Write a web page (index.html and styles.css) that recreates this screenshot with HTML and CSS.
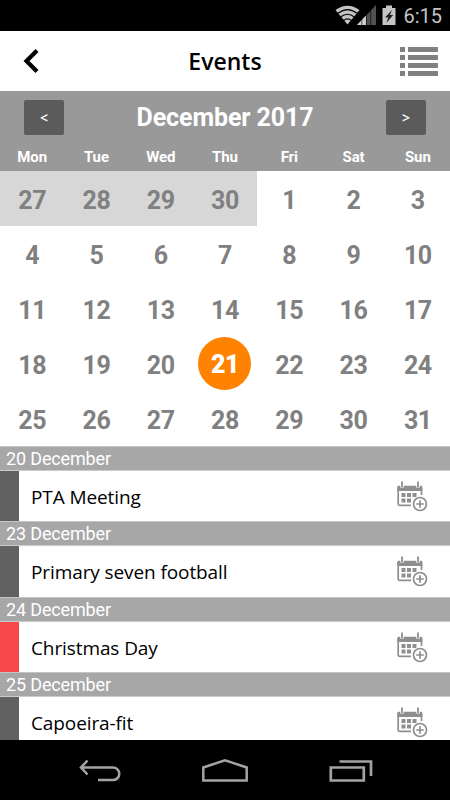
FILE: index.html
```
<!DOCTYPE html>
<html lang="en">
<head>
    <meta charset="UTF-8">
    <meta name="viewport" content="width=device-width, initial-scale=1.0">
    <title>Events</title>
    <link rel="stylesheet" href="styles.css">
</head>
<body>
    <svg class="defs" width="0" height="0">
        <symbol id="add-event" viewBox="0 0 32 32">
            <path d="M2.200 6v17q0 1.300 1.300 1.300H15M25.500 7v7" fill="none" stroke="#8e8e8e" stroke-width="1.700"/>
            <path d="M1.400 6q0-1.300 1.300-1.300h22.400q1.300 0 1.300 1.300v4h-25z" fill="#8e8e8e"/>
            <path d="M6 1v5.500M22 1v5.500" stroke="#fff" stroke-width="3.600"/>
            <path d="M6 .5v5.500M22 .5v5.500" stroke="#8e8e8e" stroke-width="1.800"/>
            <path d="M5.500 12h4v4h-4zM11 12h4v4h-4zM16.500 12h4v4h-4zM5.500 17.500h4v4h-4zM11 17.500h4v4h-4z" fill="#8e8e8e"/>
            <circle cx="24" cy="23" r="8" fill="#fff"/>
            <circle cx="24" cy="23" r="6.500" fill="#fff" stroke="#8e8e8e" stroke-width="1.700"/>
            <path d="M20.200 23h7.600M24 19.200v7.600" stroke="#8e8e8e" stroke-width="1.700"/>
        </symbol>
    </svg>

    <div class="status-bar">
        <svg class="status-icons" width="62" height="22" viewBox="0 0 62 22">
            <path d="M0.500 5Q12.500-3.500 24.500 5L12.500 19.500z" fill="#c4c4c4"/>
            <path d="M3 8.300Q12.500.8 22 8.300M5.500 12Q12.500 6.500 19.500 12M8.500 15.500Q12.500 12.300 16.500 15.500" fill="none" stroke="#000" stroke-width="1.200"/>
            <path d="M41 0v20H22z" fill="#505050"/>
            <path d="M31 10.500V20h-9z" fill="#d0d0d0"/>
            <path d="M26.800 12v9M31.400 8v13M35.700 3v18" stroke="#000" stroke-width=".6"/>
            <path d="M51 .5h6V3h3.500v17h-13V3H51z" fill="#c4c4c4"/>
            <path d="M57 5l-7 7.500h3.300l-2 5.500 7-8h-3.300z" fill="#222"/>
        </svg>
        <span class="clock">6:15</span>
    </div>

    <div class="title-bar">
        <svg class="back" width="16" height="26" viewBox="0 0 16 26"><path d="M14 2.500L3.500 13 14 23.500" fill="none" stroke="#000" stroke-width="4.200"/></svg>
        <h1>Events</h1>
        <svg class="list" width="38" height="30" viewBox="0 0 38 30">
            <path d="M0 2.500h5M8 2.500h30M0 10.500h5M8 10.500h30M0 18.500h5M8 18.500h30M0 26.500h5M8 26.500h30" stroke="#808080" stroke-width="5"/>
        </svg>
    </div>

    <div class="calendar">
        <div class="month">
            <button>&lt;</button>
            <h2>December 2017</h2>
            <button>&gt;</button>
        </div>
        <div class="weekdays">
            <span>Mon</span><span>Tue</span><span>Wed</span><span>Thu</span><span>Fri</span><span>Sat</span><span>Sun</span>
        </div>
        <div class="days">
            <span class="other">27</span><span class="other">28</span><span class="other">29</span><span class="other">30</span><span>1</span><span>2</span><span>3</span>
            <span>4</span><span>5</span><span>6</span><span>7</span><span>8</span><span>9</span><span>10</span>
            <span>11</span><span>12</span><span>13</span><span>14</span><span>15</span><span>16</span><span>17</span>
            <span>18</span><span>19</span><span>20</span><span class="selected"><b class="today">21</b></span><span>22</span><span>23</span><span>24</span>
            <span>25</span><span>26</span><span>27</span><span>28</span><span>29</span><span>30</span><span>31</span>
        </div>
    </div>

    <div class="events">
        <div class="date">20 December</div>
        <div class="event"><span>PTA Meeting</span><svg><use href="#add-event"/></svg></div>
        <div class="date">23 December</div>
        <div class="event"><span>Primary seven football</span><svg><use href="#add-event"/></svg></div>
        <div class="date">24 December</div>
        <div class="event holiday"><span>Christmas Day</span><svg><use href="#add-event"/></svg></div>
        <div class="date">25 December</div>
        <div class="event"><span>Capoeira-fit</span><svg><use href="#add-event"/></svg></div>
    </div>

    <div class="nav-bar">
        <svg width="42" height="26" viewBox="0 0 42 26"><path d="M8.500 2.500L2 9.500l6.500 7M2 9.500h32a6.300 6.300 0 0 1 0 12.600H19" fill="none" stroke="#a3a3a3" stroke-width="2.500"/></svg>
        <svg width="46" height="26" viewBox="0 0 46 26"><path d="M1.300 22.500V9.500L23 2.200l21.700 7.300v13z" fill="none" stroke="#a3a3a3" stroke-width="2.500"/></svg>
        <svg width="44" height="26" viewBox="0 0 44 26"><path d="M1.800 9.500h33v13h-33zM10.500 3.500H42v14.500" fill="none" stroke="#a3a3a3" stroke-width="2.700"/></svg>
    </div>
</body>
</html>
```
FILE: styles.css
```
body {
    display: flex;
    flex-direction: column;
    width: 450px;
    height: 800px;
    margin: 0;
    overflow: hidden;
    background-color: #fff;
    font-family: Roboto, sans-serif;
}

.defs {
    display: none;
}

.status-bar {
    display: flex;
    justify-content: flex-end;
    box-sizing: border-box;
    height: 31px;
    flex: none;
    padding: 5px 8px 0 0;
    background-color: #000;
}

.clock {
    margin-left: 6px;
    color: #c4c4c4;
    font-size: 20px;
    line-height: 23px;
}

.title-bar {
    display: flex;
    align-items: center;
    justify-content: space-between;
    box-sizing: border-box;
    height: 60px;
    flex: none;
    padding: 0 12px 0 23px;
}

.list {
    margin-top: 2px;
}

h1 {
    margin: 0;
    padding-left: 11px;
    font-family: "Open Sans", sans-serif;
    font-size: 23px;
    font-weight: 600;
}

.calendar {
    flex: none;
}

.month {
    display: flex;
    align-items: center;
    justify-content: space-between;
    height: 52px;
    padding: 0 24px;
    background-color: #999;
}

.month button {
    width: 40px;
    height: 35px;
    border: none;
    border-radius: 2px;
    background-color: #5b5b5c;
    color: #fff;
    font-family: "Open Sans", sans-serif;
    font-size: 14px;
    font-weight: 600;
}

h2 {
    margin: 0;
    color: #fff;
    font-size: 25px;
    font-weight: bold;
    letter-spacing: -0.1px;
}

.weekdays {
    display: grid;
    grid-template-columns: repeat(7, 1fr);
    height: 28px;
    background-color: #999;
    color: #fff;
    font-size: 15px;
    font-weight: bold;
    letter-spacing: -0.1px;
    line-height: 28px;
    text-align: center;
}

.days {
    display: grid;
    grid-template-columns: repeat(7, 1fr);
    grid-auto-rows: 55px;
    color: #808080;
    font-size: 25px;
    font-weight: bold;
    letter-spacing: -0.4px;
}

.days span {
    display: flex;
    align-items: center;
    justify-content: center;
    padding-top: 3px;
}

.days .other {
    background-color: #d7d7d7;
}

.days .selected {
    padding-top: 0;
}

.today {
    width: 53px;
    height: 53px;
    border-radius: 50%;
    background-color: #ff8200;
    color: #fff;
    line-height: 55px;
    text-align: center;
}

.events {
    flex: 1;
    min-height: 0;
    overflow: hidden;
}

.date {
    box-sizing: border-box;
    height: 24.6px;
    padding-left: 6px;
    border-top: 1px solid #c4c4c4;
    border-bottom: 1px solid #ccc;
    background-color: #a7a7a7;
    color: #fff;
    font-size: 18px;
    letter-spacing: -0.15px;
    line-height: 24px;
}

.event {
    display: flex;
    align-items: center;
    justify-content: space-between;
    box-sizing: border-box;
    height: 50.9px;
    padding: 1px 22px 0 12px;
    border-left: 19px solid #616161;
    font-family: "Open Sans", sans-serif;
    font-size: 19px;
    letter-spacing: -0.1px;
}

.event svg {
    width: 32px;
    height: 32px;
}

.holiday {
    border-left-color: #f6484b;
}

.nav-bar {
    display: flex;
    justify-content: space-between;
    box-sizing: border-box;
    height: 60px;
    flex: none;
    padding: 18px 77px 0 79px;
    background-color: #000;
}
```
